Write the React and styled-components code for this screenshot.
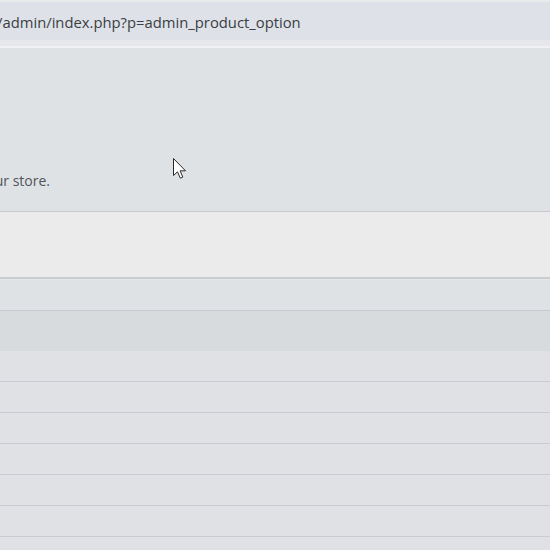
import React from 'react';
import styled, { createGlobalStyle } from 'styled-components';

const GlobalStyle = createGlobalStyle`
  html, body {
    margin: 0;
    padding: 0;
    background: #e0e1e5;
    overflow: hidden;
  }
  body {
    font-family: "Open Sans", "Noto Sans", "Liberation Sans", sans-serif;
  }
`;

const Page = styled.div`
  position: relative;
  width: 550px;
  height: 550px;
  overflow: hidden;
  display: flex;
  flex-direction: column;
  background: #e0e1e5;

  & > * {
    flex-shrink: 0;
  }
`;

const TopEdge = styled.div`
  height: 2px;
  background: #e9eaec;
`;

const AddressBar = styled.div`
  height: 38px;
  background: #dee2e8;
  display: flex;
  align-items: center;
  padding-top: 1px;
  box-sizing: border-box;
`;

const Url = styled.span`
  font-size: 14.8px;
  color: #3b3e43;
  margin-left: -3px;
  white-space: nowrap;
`;

const BarGap = styled.div`
  height: 6px;
  background: #e6e7ea;
  border-bottom: 2px solid #f0f1f2;
`;

const Header = styled.div`
  height: 164px;
  background: #dfe2e5;
  border-bottom: 1px solid #c6cad0;
  display: flex;
  align-items: flex-end;
  padding-bottom: 21px;
  box-sizing: border-box;
`;

/* the lead paragraph runs in from the left edge; its end sits at 50px */
const LeadBox = styled.div`
  width: 50px;
  display: flex;
  justify-content: flex-end;
`;

const Lead = styled.p`
  margin: 0;
  font-size: 14px;
  color: #50555b;
  white-space: nowrap;
`;

const Toolbar = styled.div`
  height: 67px;
  background: #ebebeb;
  border-bottom: 2px solid #c9cdd2;
  box-sizing: border-box;
`;

const TableHead = styled.div`
  height: 32px;
  background: #dee2e5;
  border-top: 1px solid #e4e6e8;
  border-bottom: 1px solid #c7cbd1;
  box-sizing: border-box;
`;

const FilterRow = styled.div`
  height: 40px;
  background: #d7dbde;
`;

const Row = styled.div`
  height: 31px;
  background: #e0e1e5;
  border-bottom: 1px solid #c9cdd3;
  box-sizing: border-box;
`;

const Cursor = styled.svg`
  position: absolute;
  left: 172px;
  top: 157px;
`;

export default function App() {
  const rows = Array.from({ length: 7 }, (_, i) => i);
  return (
    <>
      <GlobalStyle />
      <Page>
        <TopEdge />
        <AddressBar>
          <Url>/admin/index.php?p=admin_product_option</Url>
        </AddressBar>
        <BarGap />
        <Header>
          <LeadBox>
            <Lead>Manage product options of your store.</Lead>
          </LeadBox>
        </Header>
        <Toolbar />
        <TableHead />
        <FilterRow />
        {rows.map(i => <Row key={i} />)}
        <Cursor width="16" height="24" viewBox="0 0 16 24">
          <path
            d="M1.5 1.5 L1.5 18.5 L5.5 14.8 L8.3 21.2 L10.8 20.1 L8.1 13.8 L13.5 13.8 Z"
            fill="#ffffff"
            stroke="#2a2a2a"
            strokeWidth="1"
            strokeLinejoin="round"
          />
        </Cursor>
      </Page>
    </>
  );
}
